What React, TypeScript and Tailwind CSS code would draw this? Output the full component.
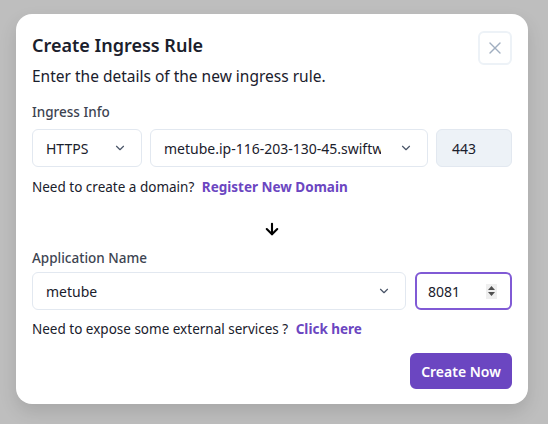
import { ChevronDown, X, ArrowDown } from "lucide-react"

const font = { fontFamily: '"Noto Sans", "Open Sans", sans-serif' }

function SelectBox({ value, className }: { value: string; className?: string }) {
  return (
    <div
      className={`flex items-center h-[38px] pl-[13px] pr-[14px] border border-[#e2e8f0] rounded-md bg-white ${className ?? ""}`}
    >
      <span className="flex-1 min-w-0 overflow-hidden whitespace-nowrap text-[14px] text-[#1a202c]">{value}</span>
      <ChevronDown className="w-[14px] h-[14px] ml-[18px] shrink-0 text-[#4a5568]" strokeWidth={2} />
    </div>
  )
}

export default function App() {
  return (
    <div className="w-[548px] h-[424px] bg-[#bebebe] pt-[14px] px-4" style={font}>
      <div className="w-[512px] bg-white rounded-2xl shadow-[0_8px_18px_rgba(0,0,0,0.12)] pt-[17px] pb-[15px] px-4 text-[#1a202c]">
        <div className="flex items-start justify-between">
          <div>
            <h2 className="text-[18px] leading-[28px] font-semibold text-[#1a202c]">Create Ingress Rule</h2>
            <p className="mt-[5px] text-[15.5px] leading-[24px]">Enter the details of the new ingress rule.</p>
          </div>
          <button className="w-[34px] h-[34px] flex items-center justify-center border-2 border-[#edf2f7] rounded-md text-[#a0aec0]">
            <X className="w-[20px] h-[20px]" strokeWidth={1.6} />
          </button>
        </div>

        <div className="mt-[14px] text-[13.5px] leading-[20px] font-medium text-[#3d4451]">Ingress Info</div>
        <div className="mt-[7px] flex gap-2">
          <SelectBox value="HTTPS" className="w-[110px]" />
          <SelectBox value="metube.ip-116-203-130-45.swiftwave.xyz" className="w-[278px]" />
          <div className="flex-1 h-[38px] flex items-center pl-[15px] bg-[#edf2f7] border border-[#e2e8f0] rounded-md text-[14px]">
            443
          </div>
        </div>
        <div className="mt-[10px] text-[13.5px] leading-[20px]">
          Need to create a domain?{" "}
          <span className="ml-1 font-bold text-[#6b46c1]">Register New Domain</span>
        </div>

        <div className="mt-[23px] flex justify-center">
          <ArrowDown className="w-[18px] h-[18px] text-black" strokeWidth={2.8} />
        </div>

        <div className="mt-[10px] text-[13.5px] leading-[20px] font-medium text-[#3d4451]">Application Name</div>
        <div className="mt-[4px] flex gap-[9px]">
          <SelectBox value="metube" className="flex-1" />
          <div className="w-[97px] h-[38px] flex items-center pl-[11px] pr-[13px] border-2 border-[#805ad5] rounded-md text-[14px]">
            <span className="flex-1">8081</span>
            <div className="w-[11px] h-[15px] bg-[#efefef] flex flex-col items-center justify-center gap-[2px]">
              <svg width="7" height="4" viewBox="0 0 7 4">
                <path d="M3.5 0L7 4H0z" fill="#505050" />
              </svg>
              <svg width="7" height="4" viewBox="0 0 7 4">
                <path d="M0 0h7L3.5 4z" fill="#505050" />
              </svg>
            </div>
          </div>
        </div>
        <div className="mt-[9px] text-[13.5px] leading-[20px]">
          Need to expose some external services ?{" "}
          <span className="ml-1 font-bold text-[#6b46c1]">Click here</span>
        </div>

        <div className="mt-[14px] flex justify-end">
          <button className="w-[102px] h-[36px] rounded-md bg-[#6b46c1] text-white text-[14px] font-semibold">
            Create Now
          </button>
        </div>
      </div>
    </div>
  )
}
